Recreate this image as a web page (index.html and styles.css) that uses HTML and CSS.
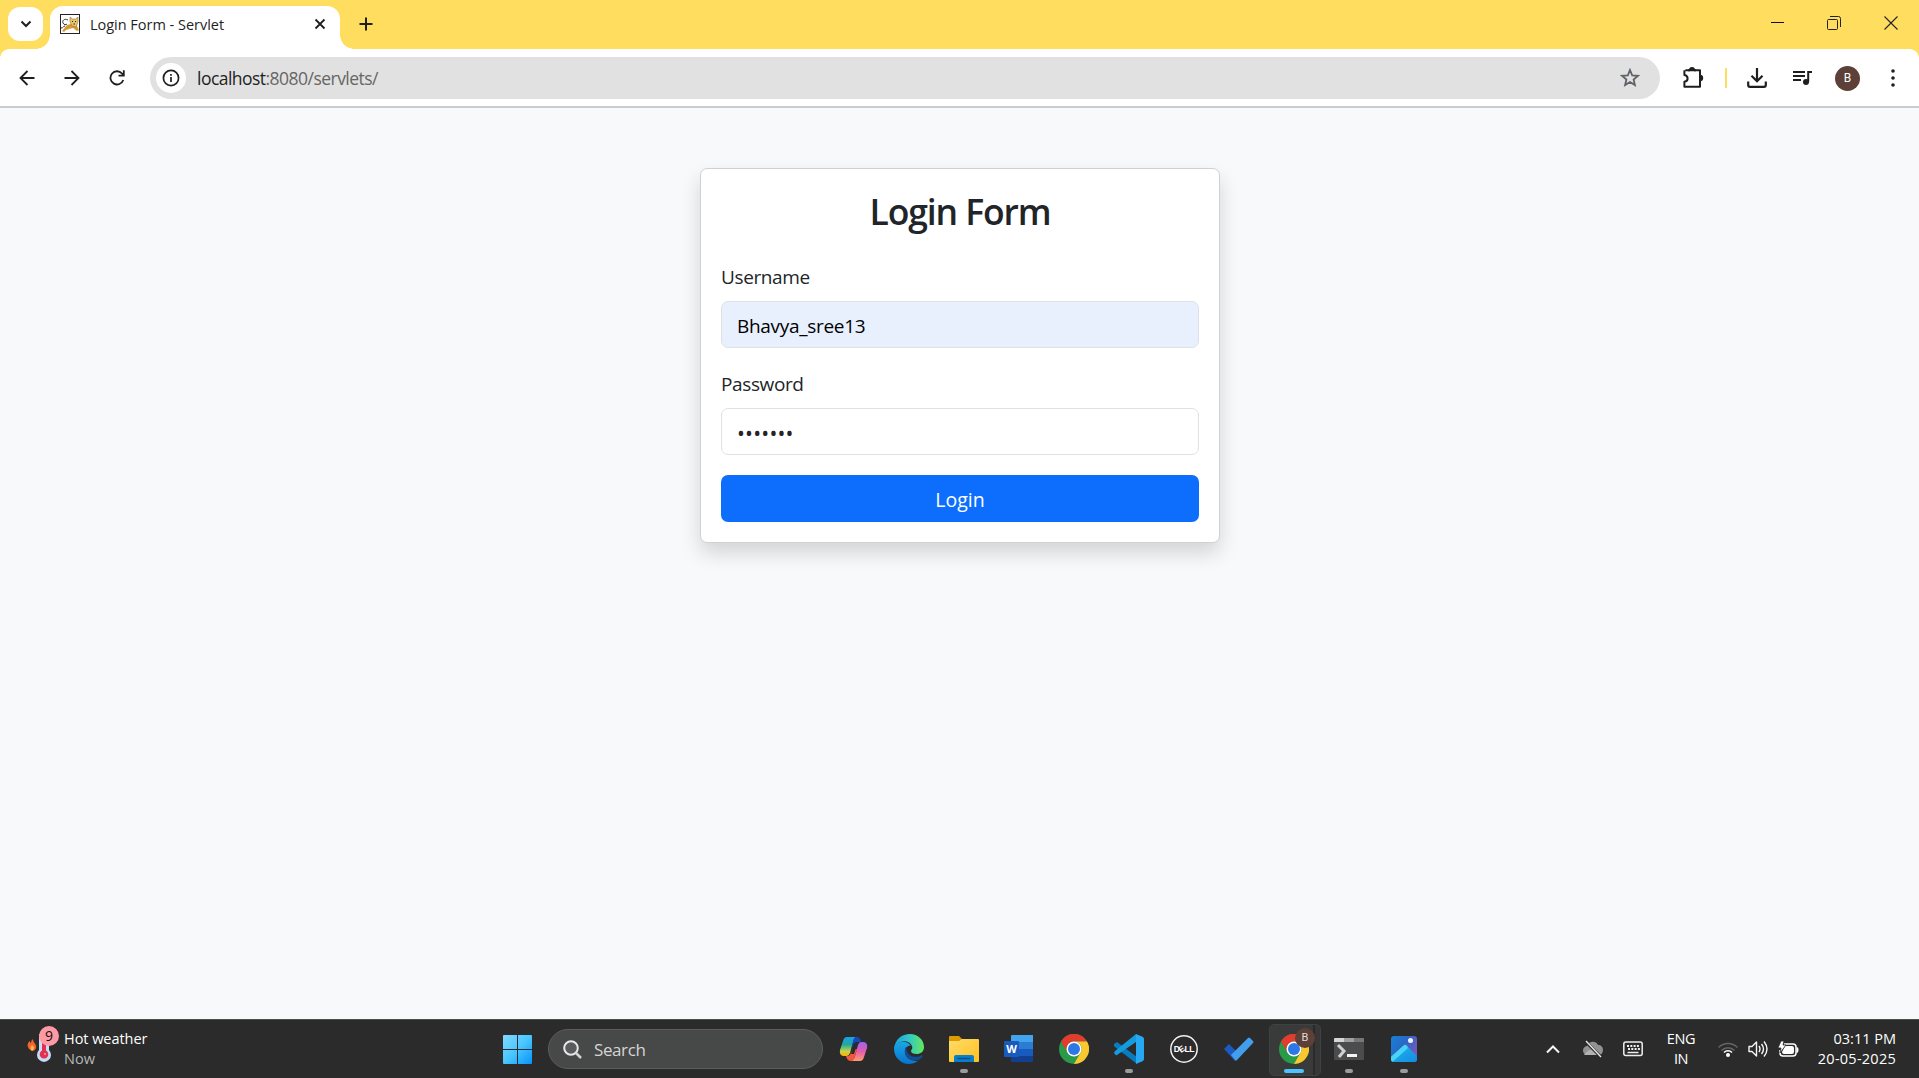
FILE: index.html
```html
<!DOCTYPE html>
<html lang="en">
<head>
<meta charset="utf-8">
<title>Login Form - Servlet</title>
<link rel="stylesheet" href="styles.css">
</head>
<body>
<header class="titlebar">
  <button class="tab-search" aria-label="Search tabs"><svg width="12" height="8" viewBox="0 0 12 8"><path d="M1.5 1.5 6 6l4.500-4.500" fill="none" stroke="#1f1f1f" stroke-width="2"/></svg></button>
  <div class="tab">
    <svg class="favicon" width="20" height="20" viewBox="0 0 20 20"><rect x=".5" y=".5" width="19" height="19" fill="#fff" stroke="#222"/><path d="M2 17l5-6 4-1 5 0 3 6-2 1-4-3-4 1-3 1-2 2z" fill="#d59a35"/><path d="m10 3 2.500 2h3L18 3v5l-2 5-4-1-2-4z" fill="#e7c568" stroke="#80632f" stroke-width=".5"/><path d="M8 6C4 4 2 7 3 9s3 2 4 1M1 14c3 0 2-2 4-2" fill="none" stroke="#333" stroke-width="1"/><path d="M12 7.500h1M15 7.500h1M13.500 10H15" stroke="#222"/></svg>
    <span class="tab-title">Login Form - Servlet</span>
    <svg class="tab-close" width="12" height="12" viewBox="0 0 12 12"><path d="m1.500 1.500 9 9m0-9-9 9" stroke="#1f1f1f" stroke-width="1.800"/></svg>
  </div>
  <svg class="new-tab" width="14" height="14" viewBox="0 0 14 14"><path d="M7 .5v13M.5 7h13" stroke="#1f1f1f" stroke-width="2"/></svg>
  <div class="window-controls">
    <svg width="13" height="14" viewBox="0 0 13 14"><path d="M0 6.500h13" stroke="#111"/></svg>
    <svg width="14" height="14" viewBox="0 0 14 14"><g fill="none" stroke="#222"><rect x=".5" y="3.500" width="10" height="10" rx="1"/><path d="M3 .5h8.500q2 0 2 2V11"/></g></svg>
    <svg width="14" height="14" viewBox="0 0 14 14"><path d="m.5.5 13 13m0-13-13 13" stroke="#222" stroke-width="1.100"/></svg>
  </div>
</header>
<nav class="toolbar">
  <div class="nav-buttons">
    <svg width="16" height="16" viewBox="0 0 16 16"><path d="M15.500 8H2M8.500 1 1.500 8l7 7" fill="none" stroke="#1f1f1f" stroke-width="1.800"/></svg>
    <svg width="16" height="16" viewBox="0 0 16 16"><path d="M.5 8H14M7.500 1l7 7-7 7" fill="none" stroke="#1f1f1f" stroke-width="1.800"/></svg>
    <svg width="16" height="16" viewBox="0 0 16 16"><path d="M14.300 10A6.600 6.600 0 1 1 13 3.500l1.800 2M9.500 5.700h5.300V.3" fill="none" stroke="#1f1f1f" stroke-width="1.800"/></svg>
  </div>
  <div class="omnibox">
    <span class="site-info"><svg width="18" height="18" viewBox="0 0 18 18"><circle cx="9" cy="9" r="7.600" fill="none" stroke="#1f1f1f" stroke-width="1.700"/><path d="M9 8v5M9 5v1.800" stroke="#1f1f1f" stroke-width="1.700"/></svg></span>
    <span class="url">localhost<span class="url-path">:8080/servlets/</span></span>
    <svg class="bookmark" width="20" height="20" viewBox="0 0 20 20"><path d="m10 2 2.200 5.300 5.700.5-4.300 3.700 1.300 5.600L10 14.100l-4.900 3 1.300-5.600L2.100 7.800l5.700-.5z" fill="none" stroke="#5f6368" stroke-width="1.800"/></svg>
  </div>
  <div class="actions">
    <svg width="22" height="22" viewBox="0 0 22 22"><path d="M3.400 3.200H8M12 3.200h6V8M18 14v5.800H2.400v-5q3.200-.6 3.200-3.400T2.400 8V3.200" fill="none" stroke="#1f1f1f" stroke-width="2" stroke-linejoin="round"/><path d="M7 3a3 3 0 0 1 6 0zM18 7.800a3.200 3.200 0 0 1 0 6.400z" fill="#1f1f1f"/><path d="M6 3.200h8M18 6v10" stroke="#1f1f1f" stroke-width="2"/></svg>
    <i class="divider"></i>
    <svg width="20" height="20" viewBox="0 0 20 20"><path d="M10 0v13M4.500 7.700l5.500 5.500 5.500-5.500M1.200 13.500V17q0 1.800 1.800 1.800h14q1.800 0 1.800-1.800v-3.500" fill="none" stroke="#1f1f1f" stroke-width="2.200"/></svg>
    <svg width="20" height="16" viewBox="0 0 20 16"><path d="M0 2h12M0 6h12M0 10h8M15.200 12V2H19" fill="none" stroke="#1f1f1f" stroke-width="2"/><circle cx="13" cy="12" r="3" fill="#1f1f1f"/></svg>
    <span class="avatar">B</span>
    <svg width="6" height="18" viewBox="0 0 6 18" fill="#1f1f1f"><circle cx="3" cy="2" r="1.800"/><circle cx="3" cy="9" r="1.800"/><circle cx="3" cy="16" r="1.800"/></svg>
  </div>
</nav>
<main class="page">
  <form class="card">
    <h2 class="card-title">Login Form</h2>
    <label class="label" for="user">Username</label>
    <input class="field autofilled" id="user" value="Bhavya_sree13">
    <label class="label" for="pass">Password</label>
    <div class="field password" id="pass">•••••••</div>
    <button class="submit" type="button">Login</button>
  </form>
</main>
<footer class="taskbar">
  <div class="weather">
    <div class="weather-icon">
      <svg width="32" height="38" viewBox="0 0 32 38"><path d="M5 25C-1 22 0 17 3 15q0 2 1 2 0-3 2-4c0 4 4 5 3 9q-1 3-4 3z" fill="#f1662b"/><path d="M5 25q-3-3 0-6 4 3 0 6z" fill="#ffb252"/><path d="M12 8h10v16a7 7 0 1 1-10 0z" fill="#c8dcf5"/><path d="M15 10h4v14.500a4.300 4.300 0 1 1-4 0z" fill="#df3154"/><circle cx="18" cy="28" r="1" fill="#ff9dad"/></svg>
      <span class="weather-badge">9</span>
    </div>
    <div class="weather-text"><span class="weather-line">Hot weather</span><span class="weather-now">Now</span></div>
  </div>
  <svg class="start" width="29" height="29" viewBox="0 0 29 29"><defs><linearGradient id="win" gradientUnits="userSpaceOnUse" x1="0" y1="0" x2="29" y2="29"><stop stop-color="#82d8ff"/><stop offset=".5" stop-color="#49c6ff"/><stop offset="1" stop-color="#0793fb"/></linearGradient></defs><path fill="url(#win)" d="M1 0h13v14H0V1q0-1 1-1zM15 0h13q1 0 1 1v13H15zM0 15h14v14H1q-1 0-1-1zM15 15h14v13q0 1-1 1H15z"/></svg>
  <div class="search"><svg width="19" height="19" viewBox="0 0 19 19"><circle cx="8" cy="8" r="6.800" fill="#5a5b5c" stroke="#e8e8ec" stroke-width="2"/><path d="m13 13 5 5" stroke="#d3d3d8" stroke-width="2.500"/></svg><span class="search-text">Search</span></div>
  <div class="apps">
    <span class="app"><svg width="30" height="30" viewBox="0 0 30 30"><defs><linearGradient id="cp1" x1="0" y1="0" x2="0" y2="1"><stop stop-color="#1b9ff0"/><stop offset=".4" stop-color="#20a99c"/><stop offset=".75" stop-color="#c5d34a"/><stop offset="1" stop-color="#ffb000"/></linearGradient><linearGradient id="cp2" x1="0" y1="0" x2="0" y2="1"><stop stop-color="#9e62ef"/><stop offset=".5" stop-color="#e45cae"/><stop offset="1" stop-color="#ff9b6b"/></linearGradient></defs><path d="M8 3h9q-2 1-3 5l-3 11q-1 3-3 3H4q-4-1-3-6L4 7q1-4 4-4z" fill="url(#cp1)"/><path d="M14 3h4q3 0 4 5h-4q-3 0-4 3l-2 6 2-9q1-5 3-5z" fill="#1648bd"/><path d="M22 8h3q4 1 3 6l-3 9q-1 4-4 4H12q3-1 4-5l3-11q1-3 3-3z" fill="url(#cp2)"/><path d="M7 22h2q2 0 3-3l2-4h4l-2 7q-1 5-4 5-4 0-5-5z" fill="#f3573d"/><path d="m15 11-3 9h3l3-9z" fill="#2a2b2a"/></svg></span>
    <span class="app"><svg width="30" height="30" viewBox="0 0 30 30"><defs><linearGradient id="ed1"><stop stop-color="#1b9fe0"/><stop offset=".5" stop-color="#31c8c7"/><stop offset="1" stop-color="#66e85b"/></linearGradient><linearGradient id="ed2" x1="0" x2="0" y2="1"><stop stop-color="#1aa7e5"/><stop offset="1" stop-color="#0873cf"/></linearGradient></defs><path d="M0 15C1 5 8 0 16 0c8 0 14 6 14 13 0 5-4 7-7 7-4 0-6-1-6-3 0-1 2-2 1-5-2-6-11-6-15-2z" fill="url(#ed1)"/><path d="M0 14C2 6 14 6 17 12c-3-1-7 2-6 7 1 6 7 8 13 8C18 31 10 31 5 26Q0 22 0 14z" fill="url(#ed2)"/><path d="M12 13c-4 8 3 15 13 13q5-4 3-5c-6 4-14 1-15-4q-1-2-1-4z" fill="#124d96"/></svg></span>
    <span class="app running"><svg width="30" height="30" viewBox="0 0 30 30"><defs><linearGradient id="fold" x2="1" y2="1"><stop stop-color="#ffdb69"/><stop offset="1" stop-color="#ffc220"/></linearGradient></defs><path d="M0 3q0-1 1-1h9l3 3v5H0z" fill="#dc9b03"/><path d="M0 7h10l3-2h16q1 0 1 1v21q0 1-1 1H1q-1 0-1-1z" fill="url(#fold)"/><path d="M5 28v-5q0-2 2-2h16q2 0 2 2v5z" fill="#087fcc"/><path d="M9 24.500h12" stroke="#075087" stroke-width="1.300" stroke-linecap="round"/></svg></span>
    <span class="app"><svg width="30" height="30" viewBox="0 0 30 30"><path d="M8 1h21v7H7V2q0-1 1-1z" fill="#42a4ed"/><path d="M7 8h22v7H7z" fill="#2b7cd3"/><path d="M7 15h22v7H7z" fill="#185abd"/><path d="M7 22h22v5q0 1-1 1H8q-1 0-1-1z" fill="#133f91"/><rect y="7" width="15" height="16" rx="1" fill="#185abd"/><text class="word-letter" x="7.500" y="19" text-anchor="middle">W</text></svg></span>
    <span class="app"><svg width="30" height="30" viewBox="0 0 30 30"><g id="chrome"><circle cx="15" cy="15" r="15" fill="#299a47"/><path d="M2 7.500A15 15 0 0 1 28 7.500H15a7.500 7.500 0 0 0-6.500 11.200z" fill="#e33b2e"/><path d="M28 7.500A15 15 0 0 1 15 30l6.500-11.200A7.500 7.500 0 0 0 15 7.500z" fill="#fcc62e"/><circle cx="15" cy="15" r="7.500" fill="#fff"/><circle cx="15" cy="15" r="6" fill="#2c78e6"/></g></svg></span>
    <span class="app running"><svg width="30" height="30" viewBox="0 0 30 30"><path d="M0 10 3 8 23 23v7L1 13q-2-1-1-3z" fill="#087cbc"/><path d="m0 19 1-2L22 0v8L3 21q-1 1-3-2z" fill="#149be0"/><path d="m22 0 7 3q1 1 1 2v20q0 1-1 2l-7 3z" fill="#27a8f3"/></svg></span>
    <span class="app"><svg width="30" height="30" viewBox="0 0 30 30"><circle cx="15" cy="15" r="13.200" fill="none" stroke="#f1f1f1" stroke-width="1.500"/><text class="dell-text" x="4.700" y="18.300">D</text><text class="dell-text" transform="rotate(-35 12 15)" x="9.800" y="18.300">E</text><text class="dell-text" x="15.500" y="18.300">L</text><text class="dell-text" x="20.300" y="18.300">L</text></svg></span>
    <span class="app"><svg width="30" height="26" viewBox="0 0 30 26"><path d="m0 13 5-5 8 8-2 9z" fill="#1b5bc0"/><path d="M7 19 24 2q1-1 2 0l3 3q1 1 0 2L13 24q-1 1-2 0z" fill="#419fee"/></svg></span>
    <span class="app current"><svg width="30" height="30" viewBox="0 0 30 30"><use href="#chrome"/></svg><span class="profile-badge">B</span></span>
    <span class="app running"><svg width="30" height="24" viewBox="0 0 30 24"><rect y="1" width="30" height="22" rx="1" fill="#4b4c4d"/><path d="M0 5V2q0-1 1-1h9v4z" fill="#d5d5d5"/><path d="M10 1h10v4H10z" fill="#a0a0a0"/><path d="M20 1h9q1 0 1 1v3H20z" fill="#777"/><path d="m4 8 6 6-5 6" fill="none" stroke="#d0d0d0" stroke-width="3"/><path d="M13 18.500h10" stroke="#f4f4f4" stroke-width="3"/></svg></span>
    <span class="app running"><svg width="28" height="28" viewBox="0 0 28 28"><defs><linearGradient id="pic" x1="0" y1="0" x2="1" y2=".6"><stop stop-color="#1184dc"/><stop offset=".5" stop-color="#2a68c4"/><stop offset="1" stop-color="#7f56b8"/></linearGradient><linearGradient id="flank" x1="0" y1="0" x2="1" y2="1"><stop stop-color="#38c4f2"/><stop offset=".5" stop-color="#1b9fe8"/><stop offset="1" stop-color="#118ce0"/></linearGradient><clipPath id="frame"><rect x="1" y="1" width="26" height="26" rx="3"/></clipPath></defs><g clip-path="url(#frame)"><path d="M0 0h28v28H0z" fill="url(#pic)"/><path d="M0 23 12.500 11.500q2.500-2.500 5 0L28 22v6H0z" fill="url(#flank)"/><path d="M1 25 15 12.500" stroke="#4ad3f5" stroke-width="5" stroke-linecap="round"/></g><circle cx="20.500" cy="5.500" r="2.500" fill="#edf4ff"/></svg></span>
  </div>
  <div class="tray">
    <svg width="14" height="9" viewBox="0 0 14 9"><path d="m1 7.500 6-6 6 6" fill="none" stroke="#f5f5f5" stroke-width="2"/></svg>
    <svg width="20" height="18" viewBox="0 0 20 18"><path d="M5 15a4.500 4.500 0 0 1-1-9 6 6 0 0 1 11-1c3 0 5 2 5 5s-2 5-4 5z" fill="#929292"/><path d="M1 15q4-6 10-5l6 5z" fill="#b2b2b2"/><path d="m2 1 16 16" stroke="#2a2a2a" stroke-width="3"/><path d="m3 1 15 16" stroke="#eee" stroke-width="1.300"/></svg>
    <svg width="20" height="16" viewBox="0 0 20 16"><rect x=".8" y="1" width="18.400" height="13.500" rx="2" fill="none" stroke="#eee" stroke-width="1.500"/><path d="M4 5h12M5 8h12" stroke="#eee" stroke-width="1.800" stroke-dasharray="2 1.300"/><path d="M4.500 11.500h11" stroke="#eee" stroke-width="1.500"/></svg>
    <div class="language"><span>ENG</span><span>IN</span></div>
    <div class="status">
      <svg width="20" height="16" viewBox="0 0 20 16"><g fill="none" stroke-width="1.500"><path d="M.7 6.500a13 13 0 0 1 18.600 0M3.500 9.500a9 9 0 0 1 13 0" stroke="#646565"/><path d="M6 11.500a5.500 5.500 0 0 1 8 0" stroke="#fff"/></g><circle cx="10" cy="14" r="2" fill="#fff"/></svg>
      <svg width="20" height="18" viewBox="0 0 20 18"><path d="M1 6.500h3L8.500 2v14L4 11.500H1zM11 6q2 3 0 6M13.500 4q4 5 0 10M16 1.500q6 7.500 0 15" fill="none" stroke="#f5f5f5" stroke-width="1.400" stroke-linejoin="round"/></svg>
      <svg width="21" height="17" viewBox="0 0 21 17"><path d="M6 3h9q3 0 3 3v6q0 3-3 3H5q-3 0-3-3V9" fill="none" stroke="#fff" stroke-width="1.500"/><path d="M7 5h7q2 0 2 2v4q0 2-2 2H6q-2 0-2-2zM18.500 6q2 0 2 3t-2 3z" fill="#fff"/><path d="M3 0 0 7h3l-1 5 6-8H5l1-4z" fill="#fff" stroke="#2a2b2a" stroke-width=".8"/></svg>
    </div>
    <div class="clock"><span class="time">03:11 PM</span><span class="date">20-05-2025</span></div>
  </div>
</footer>
</body>
</html>
```
FILE: styles.css
```css
* { box-sizing: border-box; }
body {
  margin: 0;
  height: 1078px;
  display: flex;
  flex-direction: column;
  overflow: hidden;
  font-family: "Open Sans", "Noto Sans", sans-serif;
  background: #f8f9fb;
  color: #212529;
}
svg { display: block; flex: none; }
button { border: 0; font-family: inherit; }

/* Tab strip */
.titlebar { height: 49px; flex: none; display: flex; background: #ffde5f; padding-left: 8px; }
.tab-search { width: 35px; height: 34px; margin-top: 7px; border-radius: 12px; background: #fff; display: grid; place-items: center; padding: 0; }
.tab {
  position: relative; width: 290px; height: 43px; margin: 6px 0 0 7px; padding: 0 14px 7px 10px;
  display: flex; align-items: center; border-radius: 13px 13px 0 0; background: #fff;
}
.tab::before, .tab::after { content: ""; position: absolute; bottom: 0; width: 14px; height: 14px; }
.tab::before { left: -14px; background: radial-gradient(circle at 0 0, transparent 13.5px, #fff 14px); }
.tab::after { right: -14px; background: radial-gradient(circle at 100% 0, transparent 13.5px, #fff 14px); }
.tab-title { margin-left: 10px; font-size: 14.5px; letter-spacing: -.02px; white-space: nowrap; color: #1f1f1f; }
.tab-close { margin-left: auto; }
.new-tab { margin: 17px 0 0 19px; }
.window-controls { margin: 16px 21px 0 auto; display: flex; gap: 43px; }

/* Address bar */
.toolbar {
  position: relative; height: 59px; flex: none; display: flex; align-items: center;
  background: #fff; border-bottom: 2px solid #c9cbce; padding: 1px 23px 0 19px;
}
.toolbar::before, .toolbar::after { content: ""; position: absolute; top: 0; width: 9px; height: 9px; }
.toolbar::before { left: 0; background: radial-gradient(circle at 100% 100%, transparent 8.5px, #ffde5f 9px); }
.toolbar::after { right: 0; background: radial-gradient(circle at 0 100%, transparent 8.5px, #ffde5f 9px); }
.nav-buttons { display: flex; gap: 29px; }
.omnibox { width: 1510px; height: 42px; margin-left: 25px; padding: 0 20px 0 6px; border-radius: 21px; background: #e1e1e1; display: flex; align-items: center; }
.site-info { width: 30px; height: 30px; border-radius: 50%; background: #fff; display: grid; place-items: center; }
.url { margin-left: 11px; font-size: 17.5px; letter-spacing: -.53px; color: #1f1f1f; }
.url-path { color: #666; }
.bookmark { margin-left: auto; }
.actions { display: flex; align-items: center; margin-left: auto; }
.divider { width: 2px; height: 20px; margin: 0 20px 0 21px; background: #ffde5f; }
.actions svg:nth-of-type(3) { margin-left: 26px; }
.avatar { width: 25px; height: 25px; margin: 0 30px 0 22px; border-radius: 50%; background: #5d4037; color: #fff; font: 12px/25px Roboto, sans-serif; text-align: center; }

/* Login page */
.page { flex: 1; padding-top: 60px; }
.card {
  width: 520px; height: 375px; margin: 0 auto; padding: 20px; display: flex; flex-direction: column;
  background: #fff; border: 1px solid #cfd1d3; border-radius: 7px; box-shadow: 0 10px 20px rgba(0,0,0,.15);
  position: relative; left: .5px;
}
.card-title { margin: 0 0 29px; font-size: 35.5px; line-height: 44px; font-weight: 600; letter-spacing: -1.1px; text-align: center; }
.label { font-size: 19px; line-height: 30px; margin-bottom: 9px; letter-spacing: -.38px; }
.field {
  height: 47px; flex: none; margin: 0 0 21px; padding: 2px 15px 0; border: 1px solid #dee2e6; border-radius: 7px;
  font: 19px/43px "Open Sans", "Noto Sans", sans-serif; background: #fff;
}
.autofilled { background: #e8f0fe; color: #000; letter-spacing: -.3px; }
.password { margin-bottom: 20px; padding-top: 3px; font-size: 21px; letter-spacing: .2px; }
.submit { height: 47px; flex: none; border-radius: 7px; background: #0d6efd; color: #fff; font-size: 19.5px; letter-spacing: 0; padding: 2px 0 0; }

/* Taskbar */
.taskbar { height: 59px; flex: none; display: flex; background: #2a2b2a; border-top: 1px solid #4c4d4d; color: #fff; }
.weather { width: 503px; display: flex; padding: 6px 0 0 27px; }
.weather-icon { position: relative; width: 37px; }
.weather-badge { position: absolute; left: 12px; top: 0; width: 20px; height: 20px; border-radius: 50%; background: #ff99a4; color: #111; font-size: 14px; line-height: 20px; text-align: center; }
.weather-text { display: flex; flex-direction: column; font-size: 14.5px; line-height: 20px; padding-top: 3px; }
.weather-line { letter-spacing: -.05px; }
.weather-now { color: #b8b8b8; }
.start { margin: 15px 16px 0 0; }
.search { width: 275px; height: 40px; margin-top: 9px; padding-left: 14px; border: 1px solid #5c5d5d; border-radius: 20px; background: #474848; display: flex; align-items: center; gap: 12px; }
.search-text { font-size: 17px; letter-spacing: -.4px; color: #d5d5d5; }
.apps { display: flex; padding-left: 3px; }
.app { position: relative; width: 55px; height: 58px; display: grid; place-items: center; }
.app.running::after { content: ""; position: absolute; bottom: 5px; left: 24px; width: 8px; height: 4px; border-radius: 2px; background: #9c9c9c; }
.current::before { content: ""; position: absolute; left: 3px; top: 4px; width: 50px; height: 50px; border-radius: 5px; background: linear-gradient(90deg, #393a3a 43px, #292a29 43px 45px, #363736 45px); border: 1px solid #404141; }
.current svg { position: relative; }
.current::after { content: ""; position: absolute; bottom: 5px; left: 18px; width: 20px; height: 4px; border-radius: 2px; background: #4cc2ff; }
.profile-badge { position: absolute; left: 29px; top: 8px; width: 20px; height: 20px; border-radius: 50%; background: #5d4037; color: #ddd; font: 11px/20px Roboto, sans-serif; text-align: center; }
.word-letter { font: bold 11px "Open Sans", sans-serif; fill: #fff; }
.dell-text { font: bold 8.5px "Liberation Sans", sans-serif; fill: #fff; }
.tray { flex: 1; display: flex; align-items: center; padding: 0 23px 0 115px; }
.tray > svg:nth-child(2) { margin-left: 23px; }
.tray > svg:nth-child(3) { margin-left: 20px; }
.language { width: 34px; margin-left: 21px; display: flex; flex-direction: column; text-align: center; font-size: 14.5px; line-height: 20px; letter-spacing: -.4px; }
.status { display: flex; align-items: center; gap: 10px; margin-left: 20px; }
.clock { display: flex; flex-direction: column; margin-left: auto; text-align: right; font-size: 14.5px; line-height: 20px; letter-spacing: 0; }
.date { letter-spacing: .25px; }
```
